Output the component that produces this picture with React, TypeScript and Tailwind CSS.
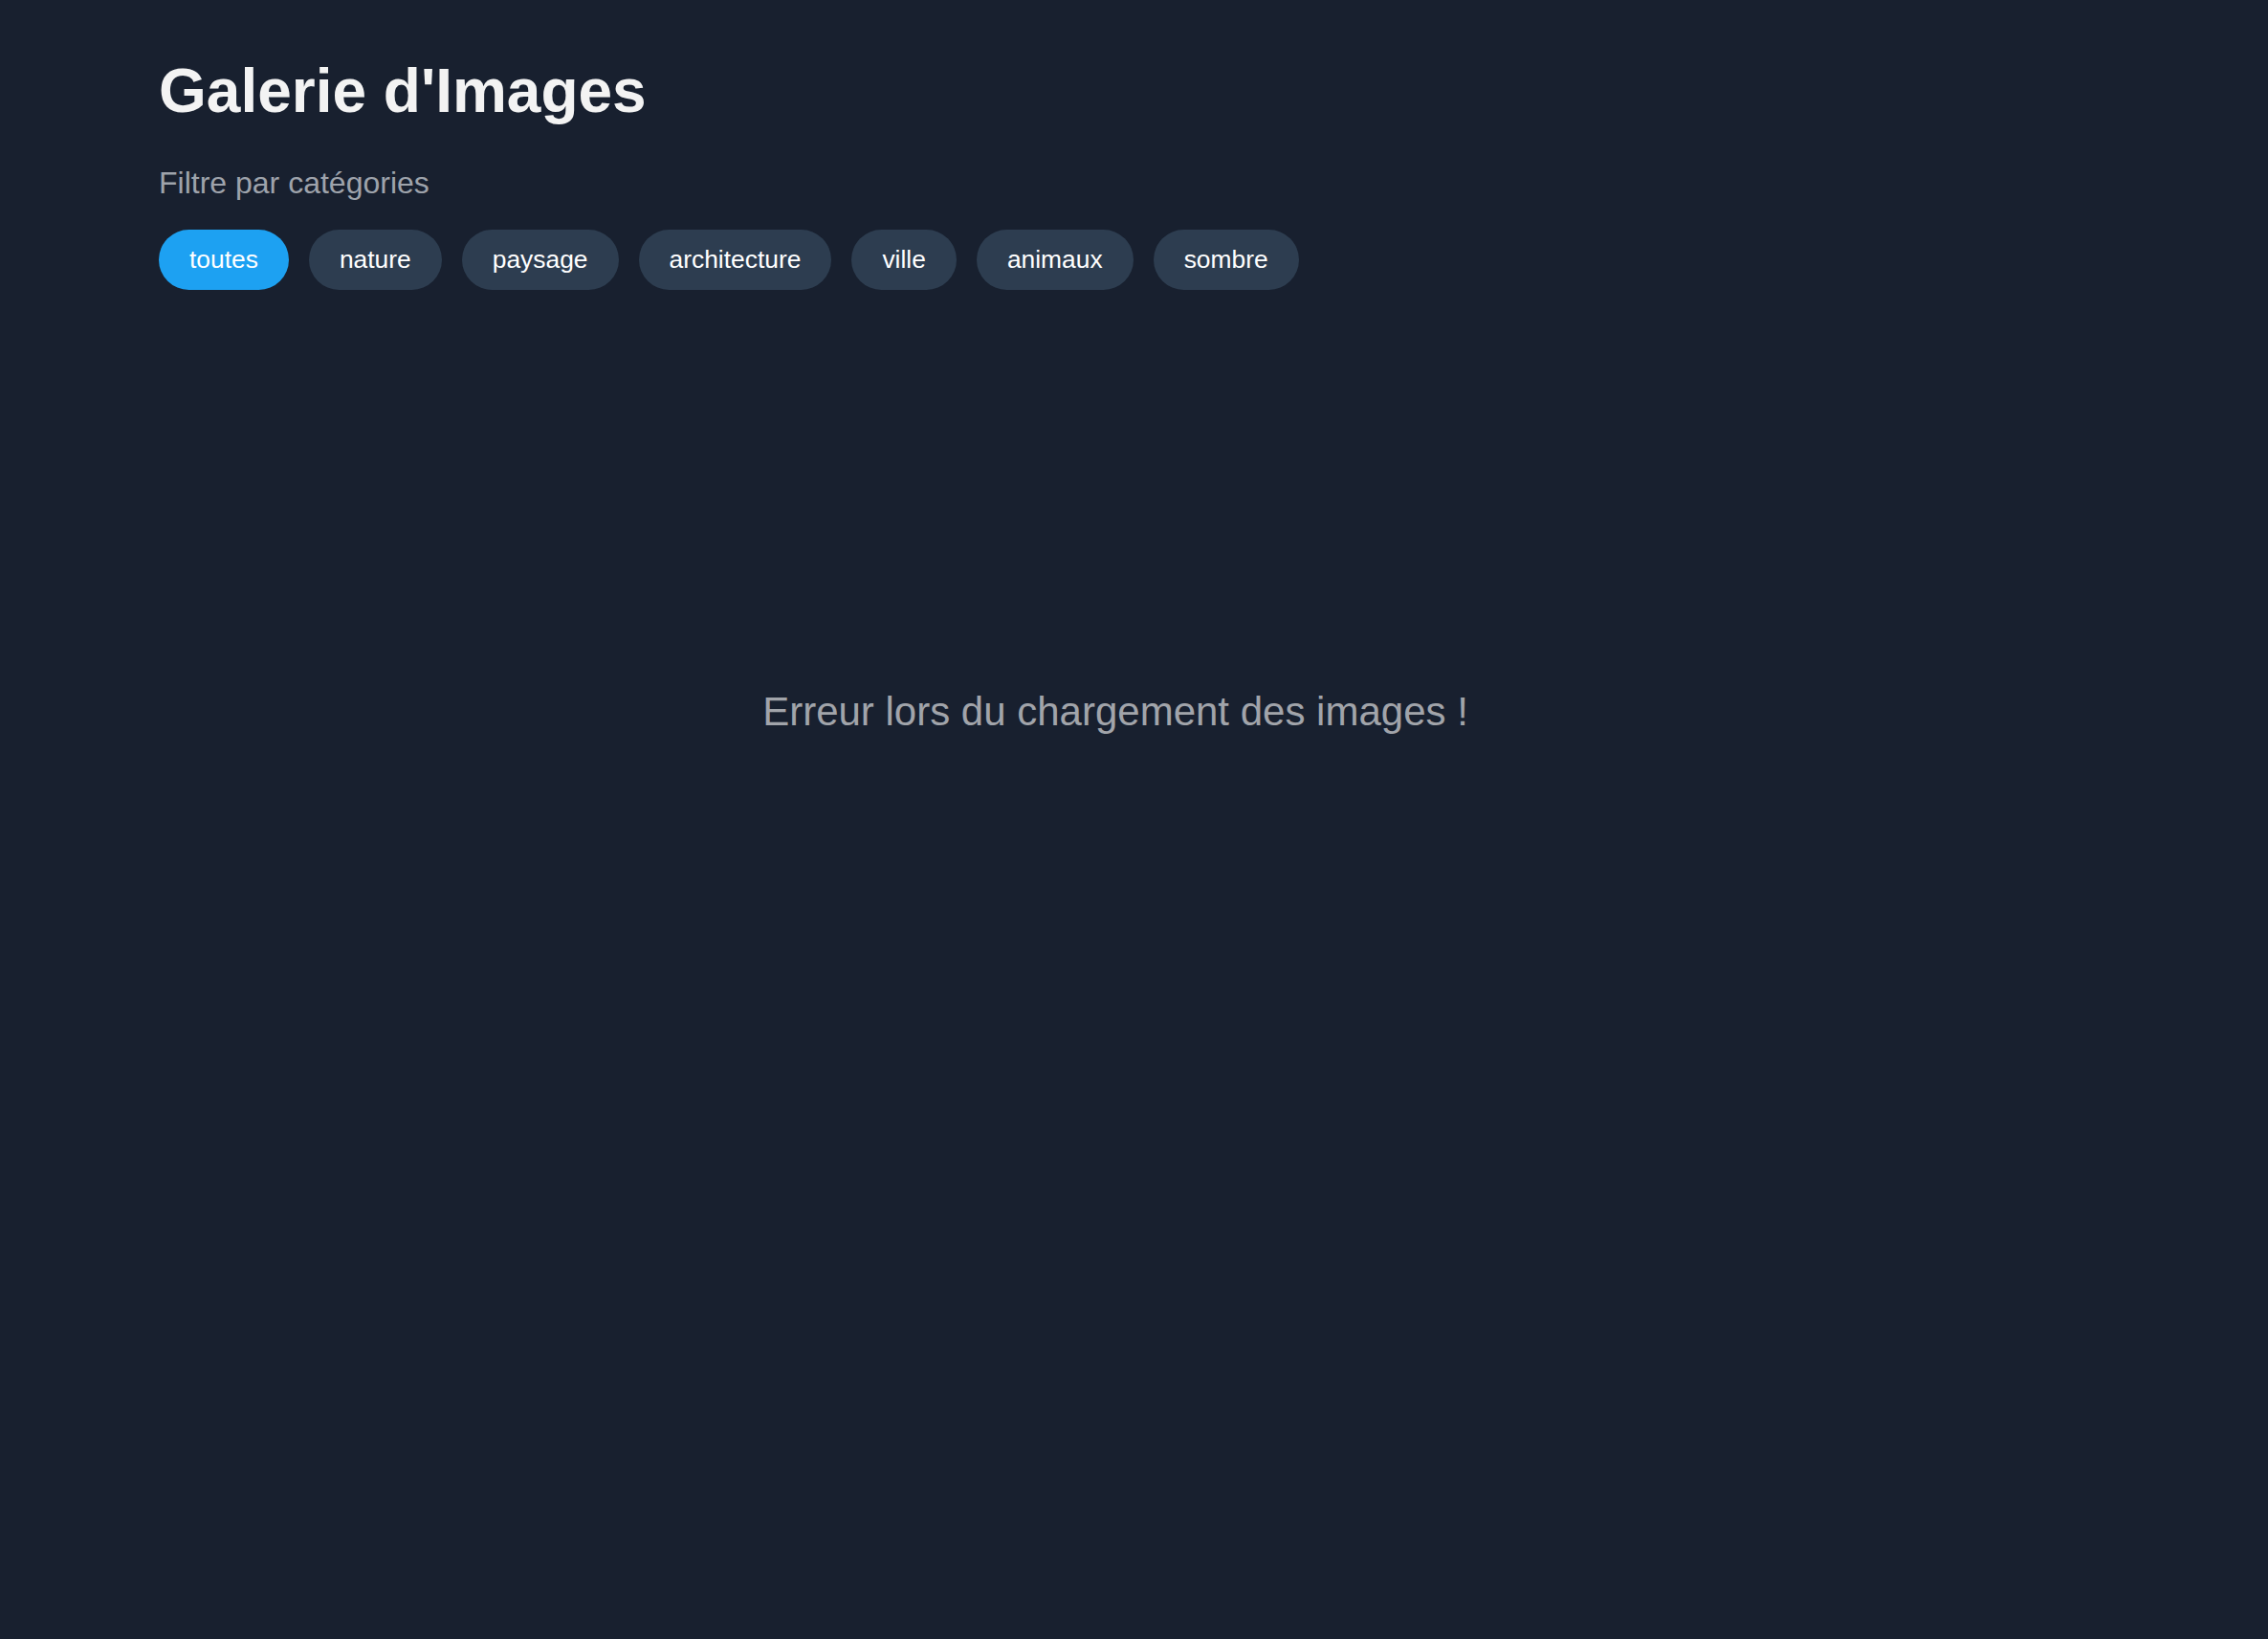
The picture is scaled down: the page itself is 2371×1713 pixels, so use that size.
import React from "react";

const categories = ["toutes", "nature", "paysage", "architecture", "ville", "animaux", "sombre"];

export default function App() {
  return (
    <div
      className="min-h-screen w-full bg-[#18202f]"
      style={{ fontFamily: '"Liberation Sans", Arial, sans-serif' }}
    >
      <div className="pl-[166px] pt-[58px]">
        <div className="w-[2000px]">
          <h1 className="text-[64px] leading-[74px] font-bold text-[#f3f3f3]">Galerie d'Images</h1>
          <p className="mt-[41px] text-[32px] leading-[37px] text-[#9ea3ab]">Filtre par catégories</p>
          <div className="mt-[30px] flex flex-wrap gap-[21px]">
            {categories.map((c, i) => (
              <button
                key={c}
                className={
                  i === 0
                    ? "h-[63px] rounded-full bg-[#1da1f2] px-[32px] text-[26.4px] leading-[29px] text-white"
                    : "h-[63px] rounded-full bg-[#2d3d50] px-[32px] text-[26.4px] leading-[29px] text-white"
                }
              >
                {c}
              </button>
            ))}
          </div>
          <div className="mt-[417px] text-center text-[42px] leading-[48px] text-[#a1a4aa]">
            Erreur lors du chargement des images !
          </div>
        </div>
      </div>
    </div>
  );
}
